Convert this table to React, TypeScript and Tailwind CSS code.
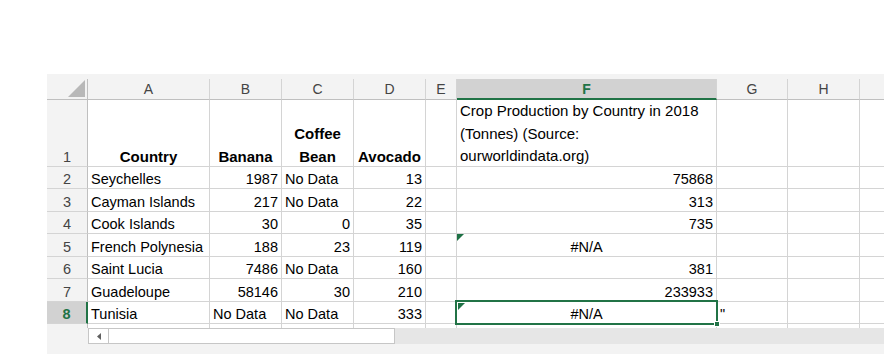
const COLS = [
  "w-[122px]",
  "w-[72px]",
  "w-[72px]",
  "w-[72px]",
  "w-[31px]",
  "w-[260px]",
  "w-[71px]",
  "w-[72px]",
  "w-[60px]",
];
const LETTERS = ["A", "B", "C", "D", "E", "F", "G", "H", ""];

// Country, Banana, Coffee Bean, Avocado, (E), F
const DATA: string[][] = [
  ["Seychelles", "1987", "No Data", "13", "", "75868"],
  ["Cayman Islands", "217", "No Data", "22", "", "313"],
  ["Cook Islands", "30", "0", "35", "", "735"],
  ["French Polynesia", "188", "23", "119", "", "#N/A"],
  ["Saint Lucia", "7486", "No Data", "160", "", "381"],
  ["Guadeloupe", "58146", "30", "210", "", "233933"],
  ["Tunisia", "No Data", "No Data", "333", "", "#N/A"],
];
const ROW_H = ["h-[22px]", "h-[23px]", "h-[22px]", "h-[23px]", "h-[22px]", "h-[23px]", "h-[22px]"];
const SEL_ROW = 6;
const SEL_COL = 5;

function ErrorMark({ className }: { className: string }) {
  return (
    <svg className={`absolute h-[7px] w-[7px] ${className}`} viewBox="0 0 7 7">
      <polygon points="0,0 7,0 0,7" fill="#1e7145" />
    </svg>
  );
}

function DataCell({ value, col, row }: { value: string; col: number; row: number }) {
  const isNum = /^\d+$/.test(value);
  const isNA = value === "#N/A";
  const align = isNA ? "justify-center" : isNum ? "justify-end pr-[3px]" : "justify-start pl-[3px]";
  const selected = row === SEL_ROW && col === SEL_COL;
  return (
    <div className={`relative flex items-end border-r border-b border-[#d4d4d4] bg-white ${COLS[col]} ${align}`}>
      {isNA && <ErrorMark className={selected ? "left-[1px] top-[1px]" : "left-0 top-0"} />}
      <span className="whitespace-nowrap leading-[18px]">{value}</span>
      {selected && (
        <div className="absolute -left-[2px] -top-[2px] z-10 h-[25px] w-[263px] border-2 border-[#217346]">
          <div className="absolute -bottom-[4px] -right-[4px] h-[6px] w-[6px] border border-white bg-[#217346]" />
        </div>
      )}
    </div>
  );
}

export default function App() {
  return (
    <div className="h-[354px] w-[884px] overflow-hidden bg-white font-['Liberation_Sans',Arial,sans-serif] text-[14.5px] text-black">
      <div className="h-[74px]" />
      <div className="ml-[47px] h-[280px] overflow-hidden bg-[#f3f3f3] pt-[5px]">
        {/* column headers */}
        <div className="flex h-[21px] w-max">
          <div className="flex w-[41px] items-end justify-end border-r border-b border-[#bfbfbf] pb-[2px] pr-[2px]">
            <svg width="17" height="17" viewBox="0 0 17 17">
              <polygon points="0,17 17,17 17,0" fill="#b8b8b8" />
            </svg>
          </div>
          {LETTERS.map((l, i) =>
            i === SEL_COL ? (
              <div
                key={i}
                className={`flex items-center justify-center border-r border-b-2 border-r-[#d4d4d4] border-b-[#217346] bg-[#d2d2d2] text-[14px] font-bold leading-[20px] text-[#217346] ${COLS[i]}`}
              >
                {l}
              </div>
            ) : (
              <div
                key={i}
                className={`flex items-center justify-center border-r border-b border-r-[#d4d4d4] border-b-[#bfbfbf] text-[14px] leading-[20px] text-[#444] ${COLS[i]}`}
              >
                {l}
              </div>
            ),
          )}
        </div>

        {/* row 1 */}
        <div className="flex h-[67px] w-max">
          <div className="flex w-[41px] items-end justify-center border-r border-b border-r-[#bfbfbf] border-b-[#d4d4d4] leading-[18px] text-[#444]">
            1
          </div>
          <div className={`flex items-end justify-center border-r border-b border-[#d4d4d4] bg-white text-[15px] font-bold leading-[18px] ${COLS[0]}`}>
            Country
          </div>
          <div className={`flex items-end justify-center border-r border-b border-[#d4d4d4] bg-white text-[15px] font-bold leading-[18px] ${COLS[1]}`}>
            Banana
          </div>
          <div className={`flex items-end justify-center border-r border-b border-[#d4d4d4] bg-white text-[15px] font-bold ${COLS[2]}`}>
            <span className="translate-y-[2px] text-center leading-[22.5px]">
              Coffee
              <br />
              Bean
            </span>
          </div>
          <div className={`flex items-end justify-center border-r border-b border-[#d4d4d4] bg-white text-[15px] font-bold leading-[18px] ${COLS[3]}`}>
            Avocado
          </div>
          <div className={`border-r border-b border-[#d4d4d4] bg-white ${COLS[4]}`} />
          <div className={`whitespace-nowrap border-r border-b border-[#d4d4d4] bg-white pl-[3px] text-[15px] leading-[22.5px] ${COLS[5]}`}>
            Crop Production by Country in 2018
            <br />
            (Tonnes) (Source:
            <br />
            ourworldindata.org)
          </div>
          <div className={`border-r border-b border-[#d4d4d4] bg-white ${COLS[6]}`} />
          <div className={`border-r border-b border-[#d4d4d4] bg-white ${COLS[7]}`} />
          <div className={`border-r border-b border-[#d4d4d4] bg-white ${COLS[8]}`} />
        </div>

        {/* rows 2-8 */}
        {DATA.map((r, ri) => {
          const selected = ri === SEL_ROW;
          return (
            <div key={ri} className={`flex w-max ${ROW_H[ri]}`}>
              {selected ? (
                <div className="flex w-[41px] items-end justify-center border-r-2 border-b border-r-[#217346] border-b-[#d4d4d4] bg-[#d2d2d2] font-bold leading-[18px] text-[#217346]">
                  {ri + 2}
                </div>
              ) : (
                <div className="flex w-[41px] items-end justify-center border-r border-b border-r-[#bfbfbf] border-b-[#d4d4d4] leading-[18px] text-[#444]">
                  {ri + 2}
                </div>
              )}
              {r.map((v, ci) => (
                <DataCell key={ci} value={v} col={ci} row={ri} />
              ))}
              <div className={`flex items-end border-r border-b border-[#d4d4d4] bg-white pl-[3px] ${COLS[6]}`}>
                <span className="leading-[18px]">{selected ? '"' : ""}</span>
              </div>
              <div className={`border-r border-b border-[#d4d4d4] bg-white ${COLS[7]}`} />
              <div className={`border-r border-b border-[#d4d4d4] bg-white ${COLS[8]}`} />
            </div>
          );
        })}

        {/* partial row below */}
        <div className="flex h-[4px] w-max">
          <div className="w-[41px] border-r border-[#bfbfbf]" />
          {COLS.map((c, i) => (
            <div key={i} className={`border-r border-[#d4d4d4] bg-white ${c}`} />
          ))}
        </div>

        {/* horizontal scrollbar */}
        <div className="flex h-[16px]">
          <div className="w-[41px]" />
          <div className="flex w-[21px] items-center justify-center border border-[#c6c6c6] bg-white">
            <svg width="4" height="7" viewBox="0 0 4 7">
              <polygon points="4,0 4,7 0,3.5" fill="#606060" />
            </svg>
          </div>
          <div className="w-[286px] border-y border-r border-[#c6c6c6] bg-white" />
          <div className="flex-1 bg-[#e6e6e6]" />
        </div>
      </div>
    </div>
  );
}
